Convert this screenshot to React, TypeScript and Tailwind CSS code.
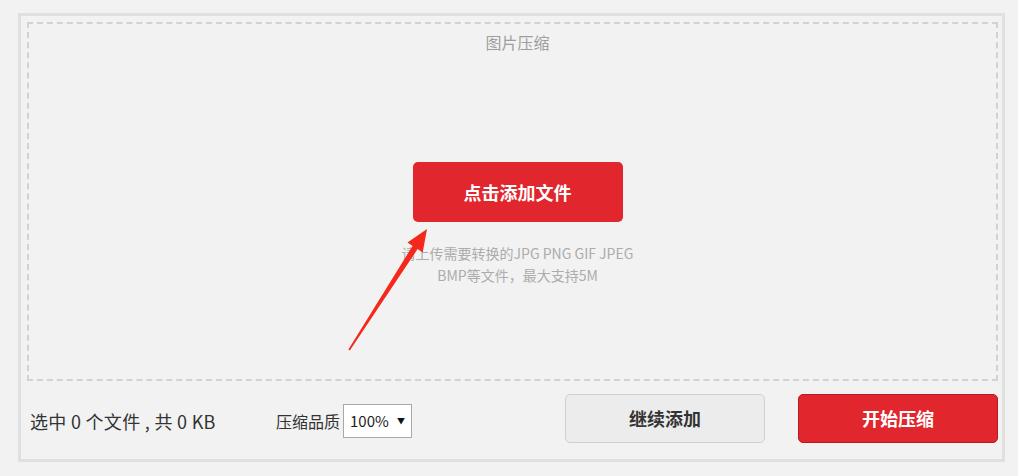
import React from "react";

export default function App() {
  const font = { fontFamily: '"Noto Sans CJK SC", "Microsoft YaHei", sans-serif' };
  return (
    <div className="relative w-[1018px] h-[476px] bg-[#f2f2f2] overflow-hidden" style={font}>
      <div className="absolute left-0 top-0 w-full h-full pl-[18px] pt-[13px]">
        <div className="w-[987px] h-[449px] border-[3px] border-[#e0e0e0] pt-[6px] pl-[6px] pr-[4px] flex flex-col">
          <div className="h-[359px] border-2 border-dashed border-[#d2d2d2] flex flex-col items-center pl-[10px]">
            <div className="mt-[7px] text-[16px] leading-[22px] text-[#9e9e9e]">图片压缩</div>
            <button className="mt-[109px] w-[210px] h-[60px] rounded-[5px] bg-[#e1262d] text-white text-[18px] font-bold flex items-center justify-center">
              点击添加文件
            </button>
            <div className="mt-[20px] text-[14px] leading-[22px] text-[#acacac] text-center">
              <div>请上传需要转换的JPG PNG GIF JPEG</div>
              <div>BMP等文件，最大支持5M</div>
            </div>
          </div>
          <div className="mt-[13px] h-[49px] flex items-center">
            <div className="w-[249px] pl-[3px] pt-[5px] text-[18px] text-[#333] whitespace-nowrap tracking-[0.3px]">
              选中 0 个文件 , 共 0 KB
            </div>
            <div className="flex items-center pt-[5px]">
              <span className="text-[16px] text-[#333] mr-[3px]">压缩品质</span>
              <div className="w-[69px] h-[34px] bg-white border border-[#a9a9a9] flex items-center justify-between pl-[6px] pr-[6px]">
                <span className="text-[15px] text-[#222]">100%</span>
                <span className="text-[8px] text-[#111]">▼</span>
              </div>
            </div>
            <div className="ml-auto flex gap-[33px]">
              <button className="w-[200px] h-[49px] rounded-[5px] bg-[#ececec] border border-[#cfcfcf] text-[18px] font-bold text-[#333] flex items-center justify-center">
                继续添加
              </button>
              <button className="w-[200px] h-[49px] rounded-[5px] bg-[#e1262d] border border-[#b81a20] text-[18px] font-bold text-white flex items-center justify-center">
                开始压缩
              </button>
            </div>
          </div>
        </div>
      </div>
      <svg className="absolute left-[340px] top-[220px]" width="100" height="140" viewBox="0 0 100 140">
        <polygon
          points="8.4,129.5 9.8,130.6 77.6,29.1 82.7,32.4 87,9 67.5,22.6 72.6,25.9"
          fill="#f5281c"
        />
      </svg>
    </div>
  );
}
